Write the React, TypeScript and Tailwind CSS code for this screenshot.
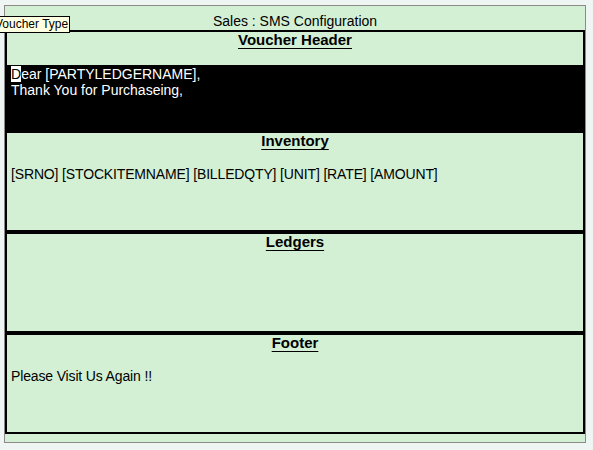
const sections = [
  { title: "Inventory", lines: ["[SRNO] [STOCKITEMNAME] [BILLEDQTY] [UNIT] [RATE] [AMOUNT]"] },
  { title: "Ledgers", lines: [] as string[] },
  { title: "Footer", lines: ["Please Visit Us Again !!"] },
]

const Heading = ({ text }: { text: string }) => (
  <div className="h-[16px] text-center text-[15px] leading-[16px] font-bold">
    <span className="underline underline-offset-[3px]">{text}</span>
  </div>
)

export default function App() {
  return (
    <div
      className="relative w-[593px] h-[450px] overflow-hidden bg-[#eef5f3] text-black"
      style={{ fontFamily: '"Liberation Sans", Arial, sans-serif' }}
    >
      <div className="pt-[5px] pl-[4px]">
        <div className="w-[582px] h-[438px] border border-[#8a8a8a] bg-[#d3f0d5]">
          <div className="h-[24px] pt-[7px] text-center text-[14px] leading-[16px]">
            Sales : SMS Configuration
          </div>
          <div className="w-[580px] border-2 border-black">
            {/* voucher header */}
            <div className="h-[97px] flex flex-col">
              <Heading text="Voucher Header" />
              <div className="h-[17px]" />
              <div className="flex-1 bg-black text-white text-[14px] leading-[16px] pl-[4px] pt-[1px]">
                <div>
                  <span className="bg-white text-black">D</span>ear [PARTYLEDGERNAME],
                </div>
                <div>Thank You for Purchaseing,</div>
              </div>
            </div>
            {sections.map((s, i) => (
              <div key={i} className="border-t-4 border-black h-[101px]">
                <Heading text={s.title} />
                <div className="pt-[17px] pl-[4px] text-[14px] leading-[16px] tracking-[-0.15px]">
                  {s.lines.map((l, j) => (
                    <div key={j}>{l}</div>
                  ))}
                </div>
              </div>
            ))}
          </div>
        </div>
      </div>

      {/* tooltip */}
      <div className="absolute left-[-8px] top-[16px] h-[17px] border border-black bg-[#ffffe1] pl-[2px] pr-[1px] text-[12px] leading-[15px] whitespace-nowrap">
        Voucher Type
      </div>
    </div>
  )
}
